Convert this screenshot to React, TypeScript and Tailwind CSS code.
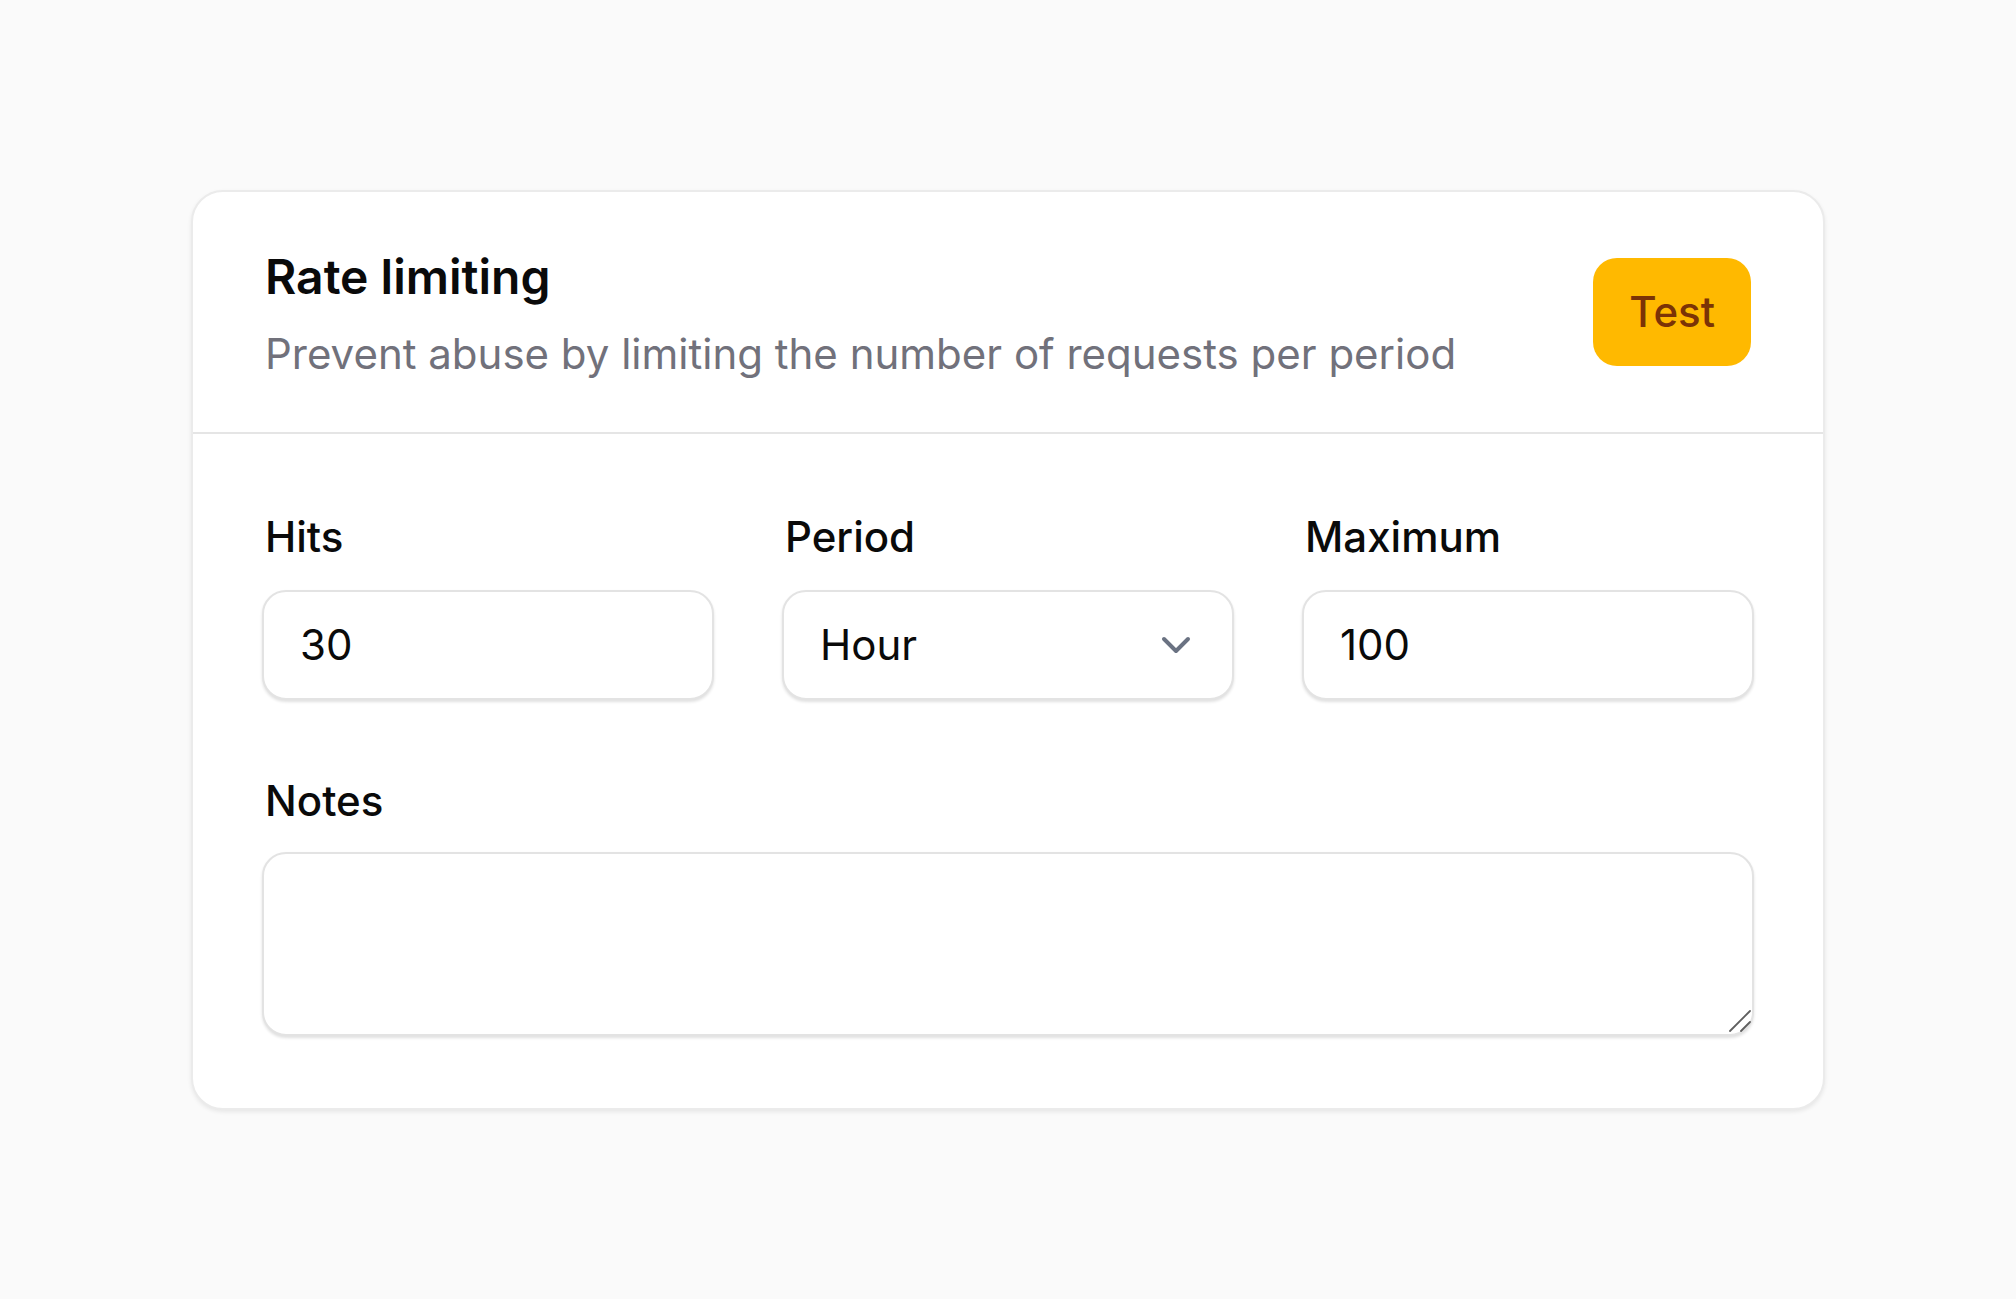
import { ChevronDown } from "lucide-react";

const inputBox =
  "h-[110px] w-full rounded-[24px] border-2 border-[#e3e3e3] bg-white px-9 text-[42px] text-neutral-950 shadow-[0_2px_3px_rgba(0,0,0,0.12)] outline-none";

const Field = ({ label, gap = "gap-6", children }: { label: string; gap?: string; children: React.ReactNode }) => (
  <div className={"flex flex-col " + gap}>
    <label className="pl-[3px] text-[42px] leading-[60px] font-medium text-neutral-950">{label}</label>
    {children}
  </div>
);

export default function App() {
  return (
    <div
      className="flex min-h-screen items-center justify-center bg-neutral-50"
      style={{ fontFamily: "Inter, 'Noto Sans', sans-serif" }}
    >
      <div className="w-[1634px] rounded-[32px] border-2 border-[#ebebeb] bg-white shadow-[0_2px_4px_rgba(0,0,0,0.08)]">
        {/* header */}
        <div className="flex items-center justify-between border-b-2 border-[#e5e5e5] px-[72px] pt-[55px] pb-[52px]">
          <div className="flex flex-col gap-[21px]">
            <h2 className="text-[48px] leading-[60px] font-semibold text-neutral-950">Rate limiting</h2>
            <p className="text-[42px] leading-[52px] text-zinc-500">
              Prevent abuse by limiting the number of requests per period
            </p>
          </div>
          <button className="mb-[3px] rounded-[24px] bg-amber-400 px-9 py-6 text-[42px] leading-[60px] font-medium text-amber-900">
            Test
          </button>
        </div>

        {/* body */}
        <div className="flex flex-col gap-[71px] px-[69px] pt-[73px] pb-[72px]">
          <div className="grid grid-cols-3 gap-[68px]">
            <Field label="Hits" gap="gap-[23px]">
              <input className={inputBox} defaultValue="30" />
            </Field>
            <Field label="Period" gap="gap-[23px]">
              <div className={inputBox + " flex items-center justify-between pr-8"}>
                <span>Hour</span>
                <ChevronDown size={48} strokeWidth={2} className="text-gray-500" />
              </div>
            </Field>
            <Field label="Maximum" gap="gap-[23px]">
              <input className={inputBox} defaultValue="100" />
            </Field>
          </div>
          <Field label="Notes" gap="gap-[21px]">
            <div className="relative">
              <textarea className="block h-[184px] w-full resize-none rounded-[24px] border-2 border-[#e3e3e3] bg-white px-9 py-6 text-[42px] shadow-[0_2px_3px_rgba(0,0,0,0.12)] outline-none" />
              {/* resize grip */}
              <svg
                className="pointer-events-none absolute right-[3px] bottom-[4px]"
                width="22"
                height="22"
                viewBox="0 0 22 22"
                stroke="#5f5f5f"
                strokeWidth="1.8"
                strokeLinecap="round"
              >
                <line x1="1" y1="21" x2="21" y2="1" />
                <line x1="12" y1="21" x2="21" y2="12" />
              </svg>
            </div>
          </Field>
        </div>
      </div>
    </div>
  );
}
